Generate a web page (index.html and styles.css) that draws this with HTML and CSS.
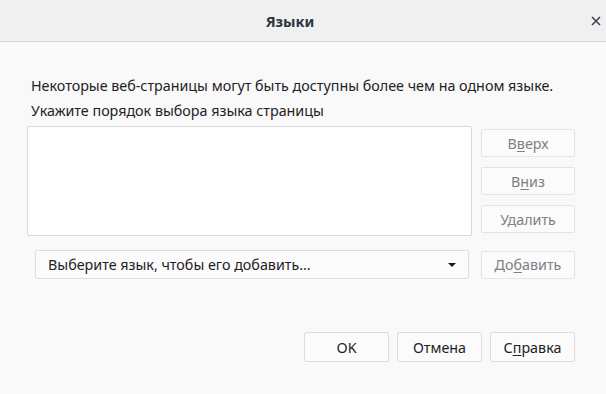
FILE: index.html
```html
<!DOCTYPE html>
<html>
  <head>
    <meta charset="UTF-8" />
    <title>Языки</title>
    <link rel="stylesheet" href="styles.css">
  </head>
  <body>
    <div class="dialog">
      <div class="titlebar">
        <span class="title">Языки</span>
        <span class="close">
          <svg width="10" height="10" viewBox="0 0 10 10">
            <path d="M1 1 L9 9 M9 1 L1 9" stroke="#3b4654" stroke-width="1.6" fill="none" />
          </svg>
        </span>
      </div>
      <div class="content">
        <p class="intro">Некоторые веб-страницы могут быть доступны более чем на одном языке.</p>
        <p class="hint">Укажите порядок выбора языка страницы</p>
        <div class="list-row">
          <div class="listbox"></div>
          <div class="side-buttons">
            <button class="btn" disabled>В<u>в</u>ерх</button>
            <button class="btn" disabled>В<u>н</u>из</button>
            <button class="btn" disabled>У<u>д</u>алить</button>
          </div>
        </div>
        <div class="add-row">
          <div class="select">
            <span>Выберите язык, чтобы его добавить...</span>
            <span class="arrow"></span>
          </div>
          <button class="btn" disabled>До<u>б</u>авить</button>
        </div>
      </div>
      <div class="footer">
        <button class="btn btn-foot">OK</button>
        <button class="btn btn-foot">Отмена</button>
        <button class="btn btn-foot">С<u>п</u>равка</button>
      </div>
    </div>
  </body>
</html>
```

FILE: styles.css
```css
:root {
  --text-color: #1f2124;
  --disabled-text: #808085;
  --border-color: #dcdcde;
  --bg-color: #f9f9fa;
}

body {
  margin: 0;
  width: 606px;
  height: 394px;
  background: var(--bg-color);
  color: var(--text-color);
  font-family: "Noto Sans", "Open Sans", sans-serif;
  font-size: 14.3px;
  overflow: hidden;
}

.titlebar {
  height: 41px;
  background: #f0f0f0;
  border-bottom: 1px solid #d6d6d6;
  display: flex;
  align-items: center;
  justify-content: center;
  position: relative;
}

.title {
  font-weight: 700;
  font-size: 14.6px;
  color: #2f353c;
  margin-left: -26px;
}

.close {
  position: absolute;
  right: 5px;
  top: 16px;
  display: flex;
}

.content {
  padding: 32px 31px 0 27px;
}

.intro,
.hint {
  margin: 0 0 0 4px;
  line-height: 24px;
}

.intro {
  margin-bottom: 1px;
}

.list-row {
  display: flex;
  gap: 9px;
  margin-top: 3px;
}

.listbox {
  flex: 1;
  height: 108px;
  background: #fff;
  border: 1px solid #d9d9db;
  border-radius: 2px;
}

.side-buttons {
  display: flex;
  flex-direction: column;
  gap: 10px;
  padding-top: 3px;
}

.btn {
  width: 94px;
  height: 28px;
  padding: 0;
  background: #fbfbfb;
  border: 1px solid #e4e4e6;
  border-radius: 2px;
  font-family: inherit;
  font-size: 14.3px;
  color: var(--disabled-text);
}

.btn u {
  text-underline-offset: 2px;
}

.add-row {
  display: flex;
  align-items: center;
  gap: 12px;
  margin-top: 14px;
  padding-left: 8px;
}

.select {
  flex: 1;
  height: 27px;
  background: #fbfbfb;
  border: 1px solid #dedee0;
  border-radius: 2px;
  display: flex;
  align-items: center;
  justify-content: space-between;
  padding: 0 12px 0 12px;
}

.arrow {
  width: 0;
  height: 0;
  border-left: 4px solid transparent;
  border-right: 4px solid transparent;
  border-top: 4px solid #1a1a1a;
}

.footer {
  display: flex;
  justify-content: flex-end;
  gap: 8px;
  padding: 53px 31px 0 0;
}

.btn-foot {
  width: 85px;
  height: 30px;
  color: var(--text-color);
  border-color: #dcdcde;
}
```
